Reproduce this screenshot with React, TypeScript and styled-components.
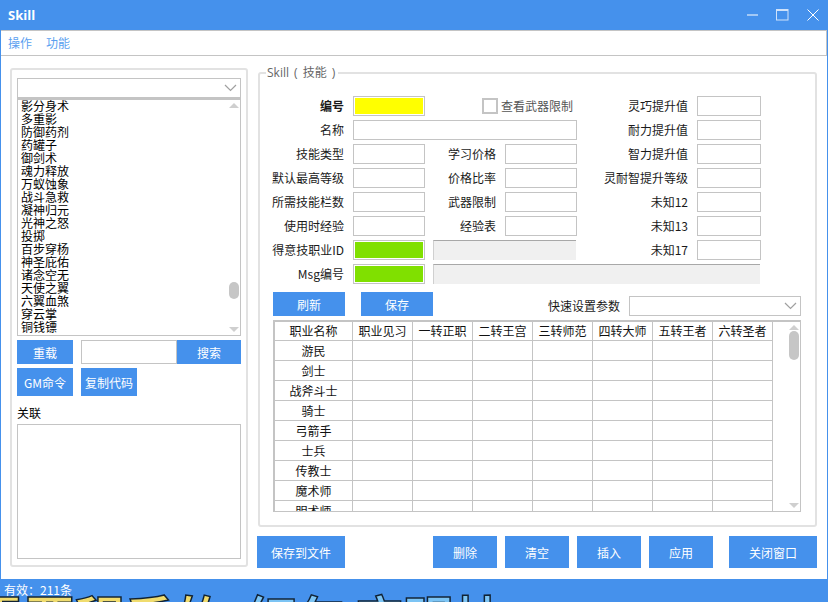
import React from "react";
import styled, { createGlobalStyle } from "styled-components";

const Global = createGlobalStyle`
  html, body { margin: 0; padding: 0; background: #4591ec; overflow: hidden; }
  * { box-sizing: border-box; }
  #root { width: 828px; height: 602px; }
`;

const FONT = `"Noto Sans CJK SC", "Liberation Sans", sans-serif`;
const BLUE = "#4591ec";
const LINE = "#c4c4c4";

const Window = styled.div`
  position: relative;
  width: 828px;
  height: 602px;
  display: flex;
  flex-direction: column;
  background: ${BLUE};
  overflow: hidden;
  font: 12px/16px ${FONT};
  color: #111;
`;
const TitleBar = styled.div`
  height: 30px;
  flex: none;
  display: flex;
  align-items: center;
  justify-content: space-between;
  padding: 0 9px 0 8px;
`;
const Title = styled.div`
  font: bold 13px "Open Sans", "Liberation Sans", sans-serif;
  color: #fff;
`;
const Controls = styled.div`
  display: flex;
  align-items: center;
  gap: 18px;
`;
const MenuBar = styled.div`
  height: 26px;
  flex: none;
  margin: 0 1px;
  background: #fff;
  border: 1px solid ${LINE};
  border-left: none;
  display: flex;
  align-items: center;
  gap: 14px;
  padding-left: 7px;
  color: #5a9ff0;
`;
const Main = styled.div`
  height: 523px;
  flex: none;
  margin: 0 1px;
  background: #fff;
  padding: 12px 10px 0 9px;
  display: flex;
  gap: 10px;
`;
const LeftGroup = styled.div`
  width: 238px;
  height: 499px;
  flex: none;
  border: 2px solid #e2e2e2;
  border-radius: 3px;
  padding: 8px 5px 0;
  display: flex;
  flex-direction: column;
`;
const Combo = styled.div<{ $w?: number }>`
  height: 20px;
  flex: none;
  width: ${(p) => (p.$w ? `${p.$w}px` : "100%")};
  border: 1px solid ${LINE};
  background: #fff;
  display: flex;
  align-items: center;
  justify-content: flex-end;
  padding-right: 3px;
`;
const ListBox = styled.div`
  position: relative;
  height: 238px;
  flex: none;
  border: 1px solid ${LINE};
  border-top: 2px solid ${LINE};
  padding: 0 0 0 3px;
  overflow: hidden;
`;
const ListItems = styled.div`
  margin-top: -1px;
`;
const ListItem = styled.div`
  height: 13px;
  line-height: 13px;
  font-size: 12px;
  white-space: nowrap;
  color: #000;
`;
const ScrollRail = styled.div<{ $w: number }>`
  position: absolute;
  top: 0;
  right: 0;
  bottom: 0;
  width: ${(p) => p.$w}px;
  display: flex;
  flex-direction: column;
  align-items: center;
  justify-content: space-between;
  padding: 3px 0;
`;
const Thumb = styled.div<{ $top: number; $h: number; $w: number }>`
  position: absolute;
  top: ${(p) => p.$top}px;
  left: 50%;
  transform: translateX(-50%);
  width: ${(p) => p.$w}px;
  height: ${(p) => p.$h}px;
  border-radius: 5px;
  background: #c6c6c6;
`;
const Arrow = styled.div<{ $down?: boolean }>`
  width: 0;
  height: 0;
  border-left: 5px solid transparent;
  border-right: 5px solid transparent;
  ${(p) => (p.$down ? "border-top: 5px solid #cfcfcf;" : "border-bottom: 5px solid #cfcfcf;")}
`;
const SearchRow = styled.div`
  display: flex;
  margin-top: 4px;
  height: 24px;
  flex: none;
`;
const CmdRow = styled.div`
  display: flex;
  gap: 8px;
  margin-top: 4px;
  flex: none;
`;
const Btn = styled.button<{ $w: number; $h?: number }>`
  width: ${(p) => p.$w}px;
  height: ${(p) => p.$h ?? 24}px;
  flex: none;
  border: none;
  border-radius: 0;
  padding: 0;
  background: ${BLUE};
  color: #fff;
  font: 12px ${FONT};
`;
const SearchInput = styled.input`
  width: 96px;
  height: 24px;
  margin-left: 8px;
  border: 1px solid ${LINE};
  background: #fff;
  outline: none;
`;
const AssocLabel = styled.div`
  margin-top: 9px;
  height: 16px;
  line-height: 16px;
  color: #000;
  flex: none;
`;
const AssocBox = styled.div`
  height: 135px;
  margin-top: 3px;
  border: 1px solid ${LINE};
  flex: none;
`;
const RightCol = styled.div`
  width: 559px;
  flex: none;
  padding-top: 4px;
  display: flex;
  flex-direction: column;
`;
const Group = styled.div`
  position: relative;
  height: 455px;
  flex: none;
  border: 2px solid #e2e2e2;
  border-radius: 3px;
  padding: 22px 14px 0 13px;
`;
const Legend = styled.div`
  position: absolute;
  left: 6px;
  top: -9px;
  padding: 0 3px 0 1px;
  background: #fff;
  color: #666;
  line-height: 16px;
  font-size: 12px;
  word-spacing: 2px;
  font-family: "Open Sans", "Noto Sans CJK SC", sans-serif;
`;
const FormGrid = styled.div`
  margin-left: -13px;
  display: grid;
  grid-template-columns: 93px 72px 80px 72px 120px 64px;
  grid-auto-rows: 20px;
  row-gap: 4px;
  align-items: center;
`;
const Label = styled.div<{ $bold?: boolean }>`
  text-align: right;
  padding-right: 9px;
  white-space: nowrap;
  font-weight: ${(p) => (p.$bold ? 700 : 400)};
  color: #1a1a1a;
`;
const Field = styled.input<{ $color?: string; $span?: number }>`
  height: 20px;
  width: 100%;
  min-width: 0;
  border: 1px solid ${LINE};
  background: ${(p) => p.$color ?? "#fff"};
  box-shadow: inset 0 0 0 1px #fff;
  outline: none;
  padding: 0;
  ${(p) => (p.$span ? `grid-column: span ${p.$span};` : "")}
`;
const Disabled = styled.div<{ $span: number; $end: number }>`
  grid-column: span ${(p) => p.$span};
  height: 20px;
  margin-left: 8px;
  margin-right: ${(p) => p.$end}px;
  background: #f0f0f0;
  border-top: 1px solid #a8a8a8;
  border-left: 1px solid #d0d0d0;
`;
const CheckWrap = styled.div`
  grid-column: span 2;
  display: flex;
  align-items: center;
  padding-left: 57px;
  color: #555;
  white-space: nowrap;
`;
const CheckBox = styled.div`
  width: 16px;
  height: 16px;
  border: 2px solid ${LINE};
  margin-right: 3px;
  flex: none;
`;
const Toolbar = styled.div`
  margin-top: 8px;
  height: 24px;
  display: flex;
  align-items: flex-end;
  gap: 16px;
`;
const QuickWrap = styled.div`
  margin-left: auto;
  display: flex;
  align-items: center;
  gap: 9px;
  color: #1a1a1a;
`;
const TableFrame = styled.div`
  position: relative;
  margin-top: 4px;
  height: 192px;
  width: 528px;
  border: 1px solid ${LINE};
  border-top-width: 2px;
  border-left-width: 2px;
  overflow: hidden;
`;
const Table = styled.table`
  border-collapse: separate;
  border-spacing: 0;
  table-layout: fixed;
  width: 498px;
`;
const Th = styled.th<{ $first?: boolean }>`
  width: ${(p) => (p.$first ? 78 : 60)}px;
  height: 19px;
  padding: 0;
  font: 12px/18px ${FONT};
  color: #111;
  text-align: center;
  border-right: 1px solid ${LINE};
  border-bottom: 1px solid ${LINE};
  white-space: nowrap;
  overflow: hidden;
`;
const Td = styled.td`
  height: 20px;
  padding: 0;
  font: 12px/19px ${FONT};
  color: #111;
  text-align: center;
  border-right: 1px solid ${LINE};
  border-bottom: 1px solid ${LINE};
`;
const Actions = styled.div`
  margin-top: 9px;
  margin-left: -1px;
  display: flex;
  height: 32px;
`;
const ActionGroup = styled.div`
  display: flex;
  gap: 8px;
  margin-left: 88px;
`;
const CloseWrap = styled.div`
  margin-left: 16px;
`;
const Status = styled.div`
  height: 23px;
  flex: none;
  padding: 3px 0 0 4px;
  line-height: 16px;
  color: #fff;
  position: relative;
  z-index: 2;
`;
const Subtitle = styled.div`
  position: absolute;
  left: -25px;
  top: 586px;
  display: flex;
  font: 700 50px/60px "Noto Sans CJK SC", sans-serif;
  white-space: nowrap;
  -webkit-text-stroke: 1.5px #123;
`;
const SubtitlePart = styled.span<{ $color: string; $gap: number }>`
  color: ${(p) => p.$color};
  margin-left: ${(p) => p.$gap}px;
`;

const skills = ["影分身术","多重影","防御药剂","药罐子","御剑术","魂力释放","万蚁蚀象","战斗急救","凝神归元","光神之怒","投掷","百步穿杨","神圣庇佑","诸念空无","天使之翼","六翼血煞","穿云掌","铜钱镖"];
const cols = ["职业见习","一转正职","二转王宫","三转师范","四转大师","五转王者","六转圣者"];
const jobs = ["游民","剑士","战斧斗士","骑士","弓箭手","士兵","传教士","魔术师","明术师"];

const Chevron = () => (
  <svg width="13" height="8" viewBox="0 0 13 8" fill="none">
    <path d="M1 1l5.5 5.5L12 1" stroke="#a0a0a0" strokeWidth="1.2" />
  </svg>
);

export default function App() {
  return (
    <Window>
      <Global />
      <TitleBar>
        <Title>Skill</Title>
        <Controls>
          <svg width="11" height="12" viewBox="0 0 11 12"><path d="M0 6h11" stroke="#fff" strokeWidth="1" /></svg>
          <svg width="13" height="12" viewBox="0 0 13 12" fill="none"><rect x=".5" y=".5" width="11.5" height="10.5" stroke="#cfe2fa" /><path d="M0 1.5h12" stroke="#cfe2fa" /></svg>
          <svg width="12" height="12" viewBox="0 0 12 12"><path d="M.5.5l11 11M11.5.5l-11 11" stroke="#fff" strokeWidth="1" /></svg>
        </Controls>
      </TitleBar>
      <MenuBar>
        <span>操作</span>
        <span>功能</span>
      </MenuBar>
      <Main>
        <LeftGroup>
          <Combo><Chevron /></Combo>
          <ListBox>
            <ListItems>
              {skills.map((s) => <ListItem key={s}>{s}</ListItem>)}
            </ListItems>
            <ScrollRail $w={12}>
              <Arrow />
              <Thumb $top={182} $h={17} $w={10} />
              <Arrow $down />
            </ScrollRail>
          </ListBox>
          <SearchRow>
            <Btn $w={56}>重载</Btn>
            <SearchInput />
            <Btn $w={64}>搜索</Btn>
          </SearchRow>
          <CmdRow>
            <Btn $w={56} $h={28}>GM命令</Btn>
            <Btn $w={56} $h={28}>复制代码</Btn>
          </CmdRow>
          <AssocLabel>关联</AssocLabel>
          <AssocBox />
        </LeftGroup>
        <RightCol>
          <Group>
            <Legend>Skill ( 技能 )</Legend>
            <FormGrid>
              <Label $bold>编号</Label>
              <Field $color="#ffff00" readOnly />
              <CheckWrap><CheckBox />查看武器限制</CheckWrap>
              <Label>灵巧提升值</Label>
              <Field readOnly />

              <Label>名称</Label>
              <Field $span={3} readOnly />
              <Label>耐力提升值</Label>
              <Field readOnly />

              <Label>技能类型</Label>
              <Field readOnly />
              <Label>学习价格</Label>
              <Field readOnly />
              <Label>智力提升值</Label>
              <Field readOnly />

              <Label>默认最高等级</Label>
              <Field readOnly />
              <Label>价格比率</Label>
              <Field readOnly />
              <Label>灵耐智提升等级</Label>
              <Field readOnly />

              <Label>所需技能栏数</Label>
              <Field readOnly />
              <Label>武器限制</Label>
              <Field readOnly />
              <Label>未知12</Label>
              <Field readOnly />

              <Label>使用时经验</Label>
              <Field readOnly />
              <Label>经验表</Label>
              <Field readOnly />
              <Label>未知13</Label>
              <Field readOnly />

              <Label>得意技职业ID</Label>
              <Field $color="#80e000" readOnly />
              <Disabled $span={2} $end={1} />
              <Label>未知17</Label>
              <Field readOnly />

              <Label>Msg编号</Label>
              <Field $color="#80e000" readOnly />
              <Disabled $span={4} $end={1} />
            </FormGrid>
            <Toolbar>
              <Btn $w={72}>刷新</Btn>
              <Btn $w={72}>保存</Btn>
              <QuickWrap>
                快速设置参数
                <Combo $w={172}><Chevron /></Combo>
              </QuickWrap>
            </Toolbar>
            <TableFrame>
              <Table>
                <thead>
                  <tr>
                    <Th $first>职业名称</Th>
                    {cols.map((c) => <Th key={c}>{c}</Th>)}
                  </tr>
                </thead>
                <tbody>
                  {jobs.map((j) => (
                    <tr key={j}>
                      <Td>{j}</Td>
                      {cols.map((c) => <Td key={c} />)}
                    </tr>
                  ))}
                </tbody>
              </Table>
              <ScrollRail $w={12}>
                <Arrow />
                <Thumb $top={9} $h={29} $w={10} />
                <Arrow $down />
              </ScrollRail>
            </TableFrame>
          </Group>
          <Actions>
            <Btn $w={88} $h={32}>保存到文件</Btn>
            <ActionGroup>
              <Btn $w={64} $h={32}>删除</Btn>
              <Btn $w={64} $h={32}>清空</Btn>
              <Btn $w={64} $h={32}>插入</Btn>
              <Btn $w={64} $h={32}>应用</Btn>
            </ActionGroup>
            <CloseWrap>
              <Btn $w={88} $h={32}>关闭窗口</Btn>
            </CloseWrap>
          </Actions>
        </RightCol>
      </Main>
      <Status>有效：211条</Status>
      <Subtitle>
        <SubtitlePart $color="#f0dc6e" $gap={0}>需要程手的</SubtitlePart>
        <SubtitlePart $color="#7cc4f4" $gap={22}>红包</SubtitlePart>
        <SubtitlePart $color="#7cc4f4" $gap={6}>应明帖</SubtitlePart>
      </Subtitle>
    </Window>
  );
}
